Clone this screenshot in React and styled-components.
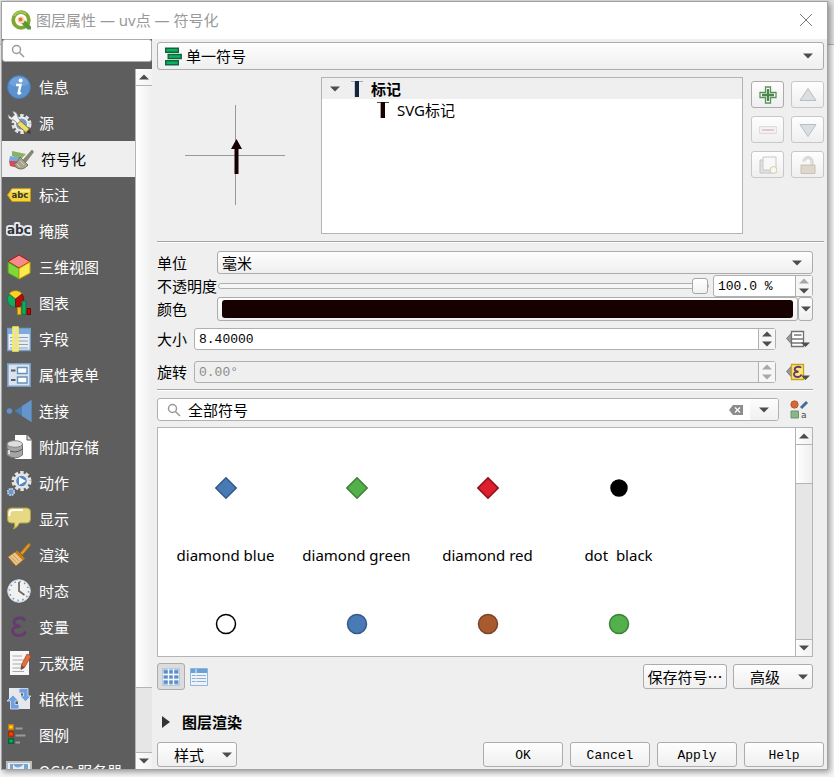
import React from 'react';
import styled, { createGlobalStyle, css } from 'styled-components';

const sans = '"Noto Sans", "Noto Sans CJK SC", sans-serif';
const mono = '"Liberation Mono", "Noto Sans CJK SC", monospace';
const cjk = '"Noto Sans CJK SC", sans-serif';

const GlobalStyle = createGlobalStyle`
  *, *::before, *::after { box-sizing: border-box; }
  body { margin: 0; background: #e4e4e4; }
  button, input, select { font: inherit; color: inherit; margin: 0; }
`;

const raised = css`
  border: 1px solid #acacac;
  border-radius: 3px;
  background: linear-gradient(#fefefe, #efefef);
`;

const Desktop = styled.div`
  height: 100vh;
  min-height: 560px;
  padding: 1px 6px 7px 1px;
  display: flex;
  background: linear-gradient(#e2e2e2 44px, #b4b4b4 44px, #b4b4b4 45px, #f6f6f6 45px);
  overflow: hidden;
`;

const Window = styled.div`
  flex: 1;
  min-width: 0;
  display: flex;
  flex-direction: column;
  border: 1px solid #a2a2a2;
  background: #efefef;
  box-shadow: 2px 2px 6px rgba(0, 0, 0, 0.4);
  font: 15px/20px ${sans};
  color: #000;
`;

const TitleBar = styled.header`
  height: 37px;
  flex: none;
  display: flex;
  align-items: center;
  gap: 4px;
  padding: 0 14px 2px 8px;
  background: #fff;
`;

const Title = styled.h1`
  flex: 1;
  margin: 0;
  font: 15px/20px ${sans};
  color: #999;
`;

const CloseButton = styled.button`
  display: flex;
  padding: 0;
  border: 0;
  background: none;
`;

const Body = styled.div`
  flex: 1;
  min-height: 0;
  display: flex;
`;

const Sidebar = styled.aside`
  width: 150px;
  flex: none;
  display: flex;
  flex-direction: column;
  gap: 7px;
  background: #5e5e5e;
`;

const SidebarSearch = styled.label`
  height: 23px;
  flex: none;
  display: flex;
  align-items: center;
  gap: 4px;
  padding: 0 8px;
  border: 1px solid #acacac;
  border-radius: 3px;
  background: #fff;
`;

const PlainInput = styled.input`
  flex: 1;
  min-width: 0;
  width: 100%;
  height: 20px;
  padding: 0;
  border: 0;
  outline: 0;
  background: transparent;
`;

const NavArea = styled.div`
  flex: 1;
  min-height: 0;
  display: flex;
`;

const NavList = styled.nav`
  flex: 1;
  overflow: hidden;
`;

const NavItem = styled.a`
  height: 36px;
  display: flex;
  align-items: center;
  gap: 7px;
  padding-left: ${(p) => (p.$active ? 6 : 4)}px;
  color: ${(p) => (p.$active ? '#000' : '#fff')};
  background: ${(p) => (p.$active ? '#efefef' : 'transparent')};
  font-family: ${cjk};
  text-decoration: none;
  white-space: nowrap;
`;

const Scroll = styled.div`
  width: 17px;
  flex: none;
  display: flex;
  flex-direction: column;
  border-left: 1px solid #b4b4b4;
  background: #e6e6e6;
`;

const ScrollButton = styled.button`
  height: 17px;
  flex: none;
  display: grid;
  place-items: center;
  padding: 0;
  border: 0 solid #b4b4b4;
  border-width: ${(p) => (p.$end ? '1px 0 0' : '0 0 1px')};
  background: linear-gradient(90deg, #fdfdfd, #f2f2f2);
`;

const Thumb = styled.div`
  flex: ${(p) => p.$size} 0 0;
  border-bottom: 1px solid #b4b4b4;
  background: linear-gradient(90deg, #fff, #efefef);
`;

const Trough = styled.div`
  flex: ${(p) => p.$size} 0 0;
`;

const Main = styled.main`
  flex: 1;
  min-width: 0;
  display: flex;
  flex-direction: column;
  padding: 3px 3px 2px 5px;
  font-family: ${mono};
`;

const SelectFrame = styled.div`
  ${raised}
  flex: ${(p) => (p.$grow ? 1 : 'none')};
  height: ${(p) => p.$height}px;
  display: grid;
  grid-template-columns: ${(p) => (p.$icon ? '29px' : '4px')} 1fr 30px;
  align-items: center;
  justify-items: center;

  select {
    grid-area: 1 / 1 / 2 / 4;
    width: 100%;
    height: 100%;
    padding: 0 0 0 ${(p) => (p.$icon ? 28 : 4)}px;
    border: 0;
    background: none;
    appearance: none;
    font: 15px/20px ${cjk};
  }
  svg {
    pointer-events: none;
    grid-row: 1;
  }
  svg:first-of-type:not(:last-of-type) {
    grid-column: 1;
  }
  svg:last-of-type {
    grid-column: 3;
  }
`;

const SymbolTop = styled.section`
  flex: none;
  display: flex;
  gap: 8px;
  margin: 7px 0;
`;

const Preview = styled.div`
  width: 156px;
  height: 156px;
  display: grid;
  place-items: center;
`;

const Tree = styled.ul`
  flex: 1;
  height: 157px;
  margin: 0;
  padding: 0;
  list-style: none;
  border: 1px solid #b4b4b4;
  background: #fff;
  font-family: ${sans};
`;

const TreeRow = styled.li`
  height: ${(p) => (p.$root ? 21 : 22)}px;
  display: flex;
  align-items: center;
  gap: 8px;
  padding-left: ${(p) => (p.$root ? 5 : 55)}px;
  background: ${(p) => (p.$root ? '#efefef' : 'transparent')};
  font-weight: ${(p) => (p.$root ? 700 : 400)};
`;

const TreeToggle = styled.button`
  width: 16px;
  height: 16px;
  display: grid;
  place-items: center;
  padding: 0;
  border: 0;
  background: none;
`;

const LayerButtons = styled.div`
  display: grid;
  grid-template-columns: 33px 33px;
  grid-auto-rows: 27px;
  gap: 8px 7px;
  padding-top: 4px;
`;

const ToolButton = styled.button`
  ${raised}
  display: grid;
  place-items: center;
  padding: 0;
  &:disabled {
    border-color: #c8c8c8;
  }
`;

const Rule = styled.hr`
  flex: none;
  height: 2px;
  margin: 0 ${(p) => (p.$inset ? 11 : 0)}px 0 0;
  border: 0;
  border-top: 1px solid #a6a6a6;
  background: #fff;
`;

const Form = styled.section`
  flex: none;
  display: flex;
  flex-direction: column;
  padding: 8px 11px 6px 0;
`;

const FormRow = styled.div`
  display: flex;
  align-items: center;
  height: ${(p) => p.$height}px;
  margin-bottom: ${(p) => p.$after || 0}px;
`;

const FieldLabel = styled.label`
  width: ${(p) => (p.$narrow ? 37 : 60)}px;
  flex: none;
  font: 15px/20px ${cjk};
  white-space: nowrap;
`;

const Slider = styled.input`
  flex: 1;
  min-width: 0;
  height: 18px;
  margin: 0 4px 0 1px;
  appearance: none;
  background: transparent;

  &::-webkit-slider-runnable-track {
    height: 6px;
    border: 1px solid #b0b0b0;
    border-radius: 3px;
    background: #f6f6f6;
  }
  &::-webkit-slider-thumb {
    appearance: none;
    width: 16px;
    height: 16px;
    margin-top: -6px;
    border: 1px solid #a6a6a6;
    border-radius: 3px;
    background: linear-gradient(#fff, #f2f2f2);
  }
`;

const SpinFrame = styled.div`
  flex: ${(p) => (p.$fixed ? 'none' : 1)};
  width: ${(p) => (p.$fixed ? '100px' : 'auto')};
  height: 22px;
  display: flex;
  border: 1px solid #b0b0b0;
  border-radius: 3px;
  background: ${(p) => (p.$disabled ? '#efefef' : '#fff')};
  color: ${(p) => (p.$disabled ? '#8a8a8a' : '#000')};
  font: 13px/20px ${mono};

  input {
    padding: 2px 0 0 4px;
  }
`;

const SpinButtons = styled.div`
  width: 17px;
  flex: none;
  display: grid;
  grid-template-rows: 1fr 1fr;
  border-left: 1px solid #b0b0b0;
  background: #f6f6f6;
`;

const SpinButton = styled.button`
  display: grid;
  place-items: center;
  padding: 0;
  border: 0;
  background: none;
`;

const ColorButton = styled.button`
  ${raised}
  flex: 1;
  height: 24px;
  display: flex;
  padding: 2px 4px;
`;

const Swatch = styled.span`
  flex: 1;
  height: 18px;
  border-radius: 3px;
  background: #170000;
`;

const ColorMenuButton = styled.button`
  ${raised}
  width: 15px;
  height: 24px;
  display: grid;
  place-items: center;
  padding: 0;
`;

const FlatButton = styled.button`
  width: ${(p) => (p.$compact ? 24 : 27)}px;
  flex: none;
  display: flex;
  justify-content: center;
  margin-left: 10px;
  padding: 0 ${(p) => (p.$compact ? 4 : 2)}px 0 0;
  border: 0;
  background: none;
`;

const FilterRow = styled.div`
  flex: none;
  display: flex;
  align-items: center;
  padding-right: 11px;
  margin: 7px 0 6px;
`;

const FilterBox = styled.div`
  flex: 1;
  height: 23px;
  display: flex;
  align-items: center;
  gap: 7px;
  padding-left: 9px;
  border: 1px solid #b0b0b0;
  border-radius: 3px;
  background: #fff;
  font: 15px/20px ${cjk};
`;

const InlineButton = styled.button`
  display: grid;
  place-items: center;
  width: ${(p) => (p.$wide ? 28 : 14)}px;
  height: 21px;
  padding: 0;
  border: 0;
  border-radius: 2px;
  background: ${(p) => (p.$wide ? 'linear-gradient(#fdfdfd, #f0f0f0)' : 'none')};
`;

const SymbolPane = styled.section`
  flex: 1;
  min-height: 0;
  display: flex;
  margin-right: 11px;
  border: 1px solid #b4b4b4;
  background: #fff;
`;

const SymbolGrid = styled.ul`
  flex: 1;
  margin: 0;
  padding: 0 0 0 2px;
  list-style: none;
  display: grid;
  grid-template-columns: repeat(4, 131px);
  grid-auto-rows: 136px;
  align-content: start;
  overflow: hidden;
  font: 15px/18px ${sans};
`;

const SymbolCell = styled.li`
  display: flex;
  flex-direction: column;
  align-items: center;
  padding-top: 2px;
  white-space: pre;
`;

const SymbolArt = styled.span`
  height: 116px;
  display: grid;
  place-items: center;
`;

const Toolbar = styled.div`
  flex: none;
  display: flex;
  align-items: center;
  padding-right: 11px;
  margin-top: 6px;
`;

const ViewButton = styled.button`
  width: 28px;
  height: 27px;
  display: grid;
  place-items: center;
  padding: 0;
  border: 1px solid ${(p) => (p.$on ? '#acacac' : 'transparent')};
  border-radius: 3px;
  background: ${(p) => (p.$on ? '#dcdcdc' : 'none')};
`;

const Spacer = styled.span`
  flex: 1;
`;

const PushButton = styled.button`
  ${raised}
  width: ${(p) => (p.$wide ? 84 : 80)}px;
  height: 25px;
  display: flex;
  align-items: center;
  justify-content: ${(p) => (p.$menu ? 'space-between' : 'center')};
  padding: ${(p) => (p.$menu ? '0 4px 0 16px' : p.$cjk ? '0' : '2px 0 0')};
  font: ${(p) => (p.$cjk ? `15px/20px ${cjk}` : `13px/20px ${mono}`)};
  white-space: nowrap;
`;

const GroupHeader = styled.button`
  flex: none;
  align-self: flex-start;
  display: flex;
  align-items: center;
  gap: 12px;
  height: 20px;
  margin: 22px 0 10px;
  padding: 0 0 0 5px;
  border: 0;
  background: none;
  font: 700 15px/20px ${cjk};
`;

const Footer = styled.footer`
  flex: none;
  display: flex;
  gap: 7px;
`;

const ButtonPair = styled.div`
  display: flex;
  gap: 6px;
`;

/* ---------- small glyphs ---------- */

const Arrow = ({ up, dim }) => (
  <svg width="10" height="6" viewBox="0 0 10 6" aria-hidden="true">
    <path d={up ? 'M0 5.5L5 .5L10 5.5Z' : 'M0 .5H10L5 5.5Z'} fill={dim ? '#a8a8a8' : '#4d4d4d'} />
  </svg>
);

const SearchIcon = () => (
  <svg width="14" height="14" viewBox="0 0 14 14" fill="none" stroke="#999" strokeWidth="1.5" aria-hidden="true">
    <circle cx="5.5" cy="5.5" r="4" />
    <path d="M8.5 8.5L13 13" />
  </svg>
);

const Logo = () => (
  <svg width="22" height="22" viewBox="0 0 22 22" aria-hidden="true">
    <circle cx="11" cy="11" r="7.800" fill="none" stroke="#7da834" strokeWidth="3.800" />
    <path d="M4 7a8 8 0 0 1 12-2" fill="none" stroke="#a5c95a" strokeWidth="1.800" />
    <path d="M11.500 11.500H15L21 17.500V20.500H17.500L11.500 14.500Z" fill="#5d9537" />
    <circle cx="11" cy="11" r="3.600" fill="#fbdcb4" />
    <circle cx="10.500" cy="10.500" r="2" fill="#e9702a" />
  </svg>
);

const Bars = () => (
  <svg width="18" height="19" viewBox="0 0 18 19" fill="#08b35c" stroke="#13643e" strokeWidth="1.4" aria-hidden="true">
    <path d="M1.7 1.2H14.3V5.2H1.7ZM4.2 7.5H17.2V11.5H4.2ZM1.7 13.8H14.3V17.8H1.7Z" />
  </svg>
);

const PreviewDrawing = () => (
  <svg width="100" height="100" viewBox="0 0 100 100" role="img" aria-label="symbol preview">
    <path d="M0 50.5H100M50.5 0V100" stroke="#999" />
    <path d="M51.500 34L57 44H53.500V69H49.500V44H46Z" fill="#170000" />
  </svg>
);

const Marker = ({ color, cap }) => (
  <svg width="12" height="16" viewBox="0 0 12 16" aria-hidden="true">
    <path d="M0 .5H12" stroke={cap} />
    <path d="M4 0H8V16H4Z" fill={color} />
    <path d="M3.500 1V16" stroke={cap} opacity=".5" />
  </svg>
);

const tools = {
  add: (
    <>
      <path d="M6.500 1H11.500V6.500H17V11.500H11.500V17H6.500V11.500H1V6.500H6.500Z" fill="#fff" stroke="#5b9158" strokeWidth="1.300" />
      <path d="M9 3V15M3 9H15" stroke="#4c854a" strokeWidth="2.400" />
    </>
  ),
  remove: (
    <>
      <path d="M.7 5.700H17.300V12.300H.7Z" fill="#f8f3f3" stroke="#dfd2d2" />
      <path d="M3 9H15" stroke="#dccccc" strokeWidth="2" />
    </>
  ),
  up: <path d="M9 2.500L17 14.500H1Z" fill="#dcdfe2" stroke="#b9bdc0" />,
  down: <path d="M9 15.500L17 3.500H1Z" fill="#dcdfe2" stroke="#b9bdc0" />,
  copy: (
    <>
      <path d="M1 4H13V17H1Z" fill="#e1e1e1" stroke="#c4c4c4" />
      <path d="M4 1H17V14H4Z" fill="#f8f8f8" stroke="#c8c8c8" />
      <circle cx="14.500" cy="14" r="3.500" fill="#f6f4e2" stroke="#d2cdb4" />
      <path d="M12.500 14H16.500M14.500 12V16" stroke="#fff" />
    </>
  ),
  lock: (
    <>
      <path d="M5 5.500a4 4 0 0 1 8 0V9" fill="none" stroke="#c9c9c9" strokeWidth="2.800" />
      <path d="M5 5.500a4 4 0 0 1 8 0V9" fill="none" stroke="#f0f0f0" />
      <path d="M2 9H16V17.500H2Z" fill="#dcd7c9" stroke="#c8c2b0" />
    </>
  ),
};

const ToolIcon = ({ name }) => (
  <svg width="18" height="18" viewBox="0 0 18 18" aria-hidden="true">{tools[name]}</svg>
);

/* ---------- sidebar drawings ---------- */

const gearTeeth = { fill: 'none', stroke: '#e4e4e4', strokeWidth: 3, strokeDasharray: '3.4 2.1' };

const art = {
  info: (
    <>
      <circle cx="12" cy="12" r="11.500" fill="#5b92cf" stroke="#467bb6" />
      <path d="M2 9a10.500 10.500 0 0 1 20 0Q12 14 2 9Z" fill="#80addd" opacity=".6" />
      <circle cx="13.600" cy="5.600" r="2" fill="#fff" />
      <path d="M9 10H13.500L11.500 18.200Q12 19 14 17.600" fill="none" stroke="#fff" strokeWidth="2.400" />
    </>
  ),
  source: (
    <>
      <circle cx="14.500" cy="13" r="8.500" {...gearTeeth} />
      <circle cx="14.500" cy="13" r="6.500" fill="#7198c4" stroke="#ececec" strokeWidth="2" />
      <path d="M1 3.500L4.500 6.500L7.500 4L5.500 .5Q10.500 .5 10.500 5.500L14 11L11.500 13.500L7 9Q1 9.500 1 3.500Z" fill="#f1f1f1" stroke="#777" strokeWidth=".7" />
      <path d="M10 13.500L13.500 10L22.500 18L19 21.500Z" fill="#eedc6d" stroke="#907b22" />
      <path d="M19 21.500L22.500 18L24 23Z" fill="#3f3f3f" />
    </>
  ),
  style: (
    <>
      <path d="M3 4L17 7L12 12L3 9Z" fill="#89b266" />
      <path d="M1 9L12 11L11 16L0 14Z" fill="#79a8df" />
      <path d="M0 14L12 14L13 22L1 19Z" fill="#d44b5e" />
      <path d="M11 10L19 18Q14 24 8 21L5 17Q9 16 11 10Z" fill="#aaa48c" stroke="#777362" />
      <path d="M14.500 12.500L23 3L24.500 5L17 15Z" fill="#8c8871" stroke="#6b6858" strokeWidth=".6" />
      <path d="M8 17L11 20M11 14L15 18" stroke="#d4d0bd" />
    </>
  ),
  label: (
    <>
      <path d="M.5 12L5 5.500H23.500V18.500H5Z" fill="#f3d43a" stroke="#c49a12" />
      <path d="M5 6.500H23V9H4Z" fill="#fbe982" />
      <text x="4.500" y="15" fontFamily="DejaVu Sans" fontSize="8.500" fontWeight="700" fill="#333">abc</text>
    </>
  ),
  mask: (
    <text x="0" y="15" fontFamily="DejaVu Sans" fontSize="12" fontWeight="700" fill="#333" stroke="#e3e8f4" strokeWidth="4" strokeLinejoin="round" paintOrder="stroke">abc</text>
  ),
  cube: (
    <>
      <path d="M12 0L23 6.500L12 13L1 6.500Z" fill="#f58c8c" stroke="#b80f0f" />
      <path d="M1 7V18L12 24V13.500Z" fill="#82d63d" stroke="#4f9a14" />
      <path d="M23 7V18L12 24V13.500Z" fill="#fce94f" stroke="#c9a500" />
    </>
  ),
  chart: (
    <>
      <path d="M8.500 8L2 3A8 8 0 0 1 15 3Z" fill="#fdd21e" stroke="#b88b00" strokeWidth=".7" />
      <path d="M8.500 8L2 3A8 8 0 0 0 8.500 16Z" fill="#0bae60" stroke="#0b7241" strokeWidth=".7" />
      <path d="M8.500 8L15 3A8 8 0 0 1 8.500 16Z" fill="#b90909" stroke="#750000" strokeWidth=".7" />
      <path d="M10.500 16.500H14V23.500H10.500Z" fill="#fdc01e" stroke="#b88b00" />
      <path d="M15 10H19V23.500H15Z" fill="#0bae60" stroke="#0b7241" />
      <path d="M20 17.500H23.500V23.500H20Z" fill="#b90909" stroke="#750000" />
    </>
  ),
  fields: (
    <>
      <path d="M.7 1.500H23.300V23.500H.7Z" fill="#e9edf2" stroke="#6f9dcc" strokeWidth="1.400" />
      <path d="M1 2H23V7H1Z" fill="#7eabdc" />
      <path d="M3 10.500H21M3 14H21M3 17.500H21M3 21H21" stroke="#8ca2ba" strokeWidth="1.200" />
      <path d="M6 0H11V24H6Z" fill="#eadfae" stroke="#fbee4c" strokeWidth="1.600" />
    </>
  ),
  form: (
    <>
      <path d="M.8 .8H23.200V23.200H.8Z" fill="#dbe3ed" stroke="#749dc8" strokeWidth="1.600" />
      <path d="M10.500 4.500H20V10.500H10.500ZM10.500 14H20V20H10.500Z" fill="#fff" stroke="#6591bf" strokeWidth="1.400" />
      <path d="M4 7.500H8.500M4 17H8.500" stroke="#555f6d" strokeWidth="2" />
    </>
  ),
  join: (
    <>
      <circle cx="2.500" cy="12" r="2.800" fill="#5f93cc" />
      <path d="M7.500 12L24.500 1V23Z" fill="#4b7fb8" />
      <path d="M15 7L24.500 1V23L15 17Z" fill="#6695cb" />
    </>
  ),
  storage: (
    <>
      <path d="M8 0H20L24.500 5V24H8Z" fill="#fff" />
      <path d="M20 0V5H24.500" fill="#d6d6d6" stroke="#555" />
      <path d="M0 9V20Q8 26 15.500 20V9Z" fill="#a6a6a6" stroke="#777" />
      <ellipse cx="7.800" cy="9" rx="7.700" ry="3.300" fill="#dedede" stroke="#888" />
      <path d="M0 14Q8 20 15.500 14" fill="none" stroke="#555" />
      <path d="M2 15V19" stroke="#ddd" strokeWidth="2" />
    </>
  ),
  action: (
    <>
      <circle cx="14.500" cy="10" r="8.500" {...gearTeeth} />
      <circle cx="14.500" cy="10" r="6.500" fill="#5588c5" stroke="#e6e6e6" strokeWidth="2.400" />
      <path d="M12 6L19 10L12 14Z" fill="#fff" />
      <circle cx="4" cy="21" r="3.300" fill="#699bd2" stroke="#d5dde6" strokeWidth="1.500" strokeDasharray="1.600 1" />
    </>
  ),
  display: (
    <>
      <path d="M4 1H20Q23.500 1 23.500 5V12Q23.500 16 20 16H12.500Q11 20 6.500 22Q8.500 19 7.500 16H4Q.5 16 .5 12V5Q.5 1 4 1Z" fill="#e5d985" stroke="#b5a13a" />
      <path d="M2.500 9V6Q3 3 7 3H16" fill="none" stroke="#fff" strokeWidth="1.800" />
    </>
  ),
  render: (
    <>
      <path d="M13 10L21 1Q24 -1 23 3L15.500 12Z" fill="#e19a2d" stroke="#a56612" />
      <path d="M8 9L16 17L9 23L1 14Z" fill="#e9c58c" stroke="#b17320" />
      <path d="M9 8.500L17 16.500" stroke="#c47f1b" strokeWidth="3" />
      <path d="M4 14L10 20M6 12L12 18" stroke="#c69247" strokeWidth=".8" />
    </>
  ),
  clock: (
    <>
      <circle cx="12" cy="12" r="11.300" fill="#f1f2f0" stroke="#d7d7d7" />
      <circle cx="12" cy="12" r="9.500" fill="none" stroke="#6da0d8" strokeWidth="1.600" strokeDasharray="1.600 3.374" />
      <path d="M12 3V12L17.500 16" fill="none" stroke="#666" strokeWidth="1.700" />
    </>
  ),
  variable: (
    <path d="M17.500 6Q17 2.500 12.500 3Q7 3.500 7 7.300Q7.500 11 13.500 11.300Q5.500 11.300 5.500 16Q6 20.500 12 20.500Q17 20.500 18.500 16.500" fill="none" stroke="#663b70" strokeWidth="2.800" />
  ),
  metadata: (
    <>
      <path d="M3 0H22V24H3Z" fill="#f7f7f7" />
      <path d="M5.500 5H15M5.500 9H17M5.500 13H16M5.500 17H15M5.500 20.500H17" stroke="#aaa" />
      <path d="M20 3L24 5L17.500 16.500L14 18.500L14.500 14Z" fill="#e4703d" stroke="#a84b21" strokeWidth=".8" />
      <path d="M14.500 14L17.500 16.500L14 18.500Z" fill="#555" />
    </>
  ),
  dependency: (
    <>
      <path d="M2 1H14V13H2ZM11 9H23V22H11Z" fill="#e6e8eb" />
      <path d="M12 1.500H21V9H24L18.500 14.500L13 9H16.500V6H12Z" fill="#6fa0e2" stroke="#dce9fa" strokeWidth=".8" />
      <path d="M12 22H3.500V14H0L6 8L11.500 14H8V17.500H12Z" fill="#6fa0e2" stroke="#dce9fa" strokeWidth=".8" />
    </>
  ),
  legend: (
    <>
      <path d="M1.700 1.700H6.300V6.300H1.700Z" fill="#fddc12" stroke="#c77c12" strokeWidth="1.400" />
      <path d="M1.700 8.700H6.300V13.300H1.700Z" fill="#f64c0b" stroke="#aa2d00" strokeWidth="1.400" />
      <path d="M1.700 15.700H6.300V20.300H1.700Z" fill="#08b35c" stroke="#08623a" strokeWidth="1.400" />
      <path d="M8.500 5.500H15.500M8.500 12.500H18.500M8.500 19.500H13" stroke="#9a9a9a" strokeWidth="1.800" />
    </>
  ),
  server: (
    <>
      <path d="M0 3H24V22H0Z" fill="#e9eef4" stroke="#bdbdbd" strokeWidth="2" />
      <path d="M3 5H21V18H3Z" fill="#78a5d2" />
      <path d="M6 5Q10 12 17 5V12H6Z" fill="#e9eef4" />
    </>
  ),
};

const NavIcon = ({ name }) => (
  <svg width="26" height="26" viewBox="-1 -1 26 26" aria-hidden="true">{art[name]}</svg>
);

const navItems = [
  ['info', '信息'], ['source', '源'], ['style', '符号化'], ['label', '标注'], ['mask', '掩膜'],
  ['cube', '三维视图'], ['chart', '图表'], ['fields', '字段'], ['form', '属性表单'], ['join', '连接'],
  ['storage', '附加存储'], ['action', '动作'], ['display', '显示'], ['render', '渲染'], ['clock', '时态'],
  ['variable', '变量'], ['metadata', '元数据'], ['dependency', '相依性'], ['legend', '图例'], ['server', 'QGIS 服务器'],
];

const symbols = [
  { shape: 'diamond', fill: '#487bb6', edge: '#34598a', name: 'diamond blue' },
  { shape: 'diamond', fill: '#54b04a', edge: '#3c8035', name: 'diamond green' },
  { shape: 'diamond', fill: '#dd1f2c', edge: '#8a101a', name: 'diamond red' },
  { shape: 'dot', fill: '#000', edge: '#000', name: 'dot  black', r: 8 },
  { shape: 'dot', fill: '#fff', edge: '#000' },
  { shape: 'dot', fill: '#487bb6', edge: '#34598a' },
  { shape: 'dot', fill: '#aa5a2f', edge: '#7b4427' },
  { shape: 'dot', fill: '#54b04a', edge: '#3c8035' },
];

const SymbolShape = ({ shape, fill, edge, r = 9.5 }) => (
  <svg width="24" height="24" viewBox="0 0 24 24" fill={fill} stroke={edge} strokeWidth="1.500" aria-hidden="true">
    {shape === 'diamond' ? <path d="M12 1.800L22.200 12L12 22.200L1.800 12Z" /> : <circle cx="12" cy="12" r={r} />}
  </svg>
);

const OverrideIcon = ({ active }) => (
  <svg width="25" height="18" viewBox="0 0 25 18" aria-hidden="true">
    <path d="M6 2.500V14.500L.5 8.500Z" fill="#999" stroke="#777" />
    <path d="M5.500 1.500H17.500V16.500H5.500Z" fill={active ? '#fbe77c' : '#fff'} stroke={active ? '#c9a312' : '#707070'} strokeWidth="1.300" />
    {active ? (
      <path d="M15 5Q14.500 3.500 12 3.700Q8.500 4 8.700 6.500Q9 8.500 12.500 8.700Q7.700 8.800 8 11.500Q8.300 14 11.500 14Q14.500 14 15.500 11.500" fill="none" stroke="#663b70" strokeWidth="1.900" />
    ) : (
      <path d="M8 5H15.500M6 9H17M6 13H17" stroke="#777" strokeWidth="1.500" />
    )}
    <path d="M15 12.500H24L19.500 17Z" fill="#4d4d4d" />
  </svg>
);

const StyleManagerIcon = () => (
  <svg width="19" height="19" viewBox="0 0 19 19" aria-hidden="true">
    <circle cx="4.500" cy="4.500" r="3.700" fill="#d46a36" stroke="#ac4a1c" strokeWidth=".7" />
    <path d="M11 8L17 2" stroke="#426c99" strokeWidth="3" />
    <path d="M1 11H8.500V18H1Z" fill="#8bb48b" stroke="#6a946b" />
    <text x="11" y="18" fontFamily="DejaVu Sans" fontSize="9" fill="#444">a</text>
  </svg>
);

const ClearIcon = () => (
  <svg width="14" height="10" viewBox="0 0 14 10" aria-hidden="true">
    <path d="M4 0H14V10H4L0 5Z" fill="#8c8c8c" />
    <path d="M6 2.500L11 7.500M11 2.500L6 7.500" stroke="#fff" strokeWidth="1.200" />
  </svg>
);

const GridIcon = () => (
  <svg width="18" height="18" viewBox="0 0 18 18" aria-hidden="true">
    <path d="M0 0H18V18H0Z" fill="#b4cbe3" />
    <path d="M2 4H16M2 9H16M2 14H16" stroke="#5c8fc6" strokeWidth="3.400" strokeDasharray="4 1" />
    <path d="M6.500 1V17M11.500 1V17M1 6.500H17M1 11.500H17" stroke="#f4f8fc" strokeWidth="1.400" />
  </svg>
);

const ListIcon = () => (
  <svg width="18" height="18" viewBox="0 0 18 18" aria-hidden="true">
    <path d="M.5 .5H17.500V17.500H.5Z" fill="#edf3f9" stroke="#8fb6dc" />
    <path d="M1 1H17V5H1Z" fill="#6c9fd2" />
    <path d="M2 7.500H16M2 10.500H16M2 13.500H16" stroke="#8dafd2" strokeWidth="1.200" />
    <path d="M6 1V17" stroke="#e5eef8" />
  </svg>
);

const ScrollBar = ({ thumb, rest }) => (
  <Scroll>
    <ScrollButton aria-label="scroll up"><Arrow up /></ScrollButton>
    <Thumb $size={thumb} />
    <Trough $size={rest} />
    <ScrollButton $end aria-label="scroll down"><Arrow /></ScrollButton>
  </Scroll>
);

const SpinBox = ({ id, value, fixed, disabled, atMax, label }) => (
  <SpinFrame $fixed={fixed} $disabled={disabled}>
    <PlainInput id={id} defaultValue={value} disabled={disabled} aria-label={label} />
    <SpinButtons>
      <SpinButton disabled={disabled || atMax} aria-label="increase"><Arrow up dim={disabled || atMax} /></SpinButton>
      <SpinButton disabled={disabled} aria-label="decrease"><Arrow dim={disabled} /></SpinButton>
    </SpinButtons>
  </SpinFrame>
);

export default function App() {
  return (
    <Desktop>
      <GlobalStyle />
      <Window>
        <TitleBar>
          <Logo />
          <Title>图层属性 — uv点 — 符号化</Title>
          <CloseButton aria-label="close">
            <svg width="14" height="14" viewBox="0 0 14 14" stroke="#777"><path d="M1 1L13 13M13 1L1 13" /></svg>
          </CloseButton>
        </TitleBar>
        <Body>
          <Sidebar>
            <SidebarSearch>
              <SearchIcon />
              <PlainInput aria-label="search" />
            </SidebarSearch>
            <NavArea>
              <NavList>
                {navItems.map(([icon, text]) => (
                  <NavItem key={icon} href={`#${icon}`} $active={icon === 'style'}>
                    <NavIcon name={icon} />
                    {text}
                  </NavItem>
                ))}
              </NavList>
              <ScrollBar thumb={602} rest={64} />
            </NavArea>
          </Sidebar>
          <Main>
            <SelectFrame $height={28} $icon>
              <select aria-label="renderer"><option>单一符号</option></select>
              <Bars />
              <Arrow />
            </SelectFrame>
            <SymbolTop>
              <Preview><PreviewDrawing /></Preview>
              <Tree>
                <TreeRow $root>
                  <TreeToggle aria-label="collapse"><Arrow /></TreeToggle>
                  <Marker color="#14253f" cap="#a5acb5" />
                  标记
                </TreeRow>
                <TreeRow>
                  <Marker color="#170000" cap="#574848" />
                  SVG标记
                </TreeRow>
              </Tree>
              <LayerButtons>
                <ToolButton aria-label="add layer"><ToolIcon name="add" /></ToolButton>
                <ToolButton disabled aria-label="move up"><ToolIcon name="up" /></ToolButton>
                <ToolButton disabled aria-label="remove layer"><ToolIcon name="remove" /></ToolButton>
                <ToolButton disabled aria-label="move down"><ToolIcon name="down" /></ToolButton>
                <ToolButton disabled aria-label="duplicate layer"><ToolIcon name="copy" /></ToolButton>
                <ToolButton disabled aria-label="lock colour"><ToolIcon name="lock" /></ToolButton>
              </LayerButtons>
            </SymbolTop>
            <Rule />
            <Form>
              <FormRow $height={23} $after={1}>
                <FieldLabel htmlFor="unit">单位</FieldLabel>
                <SelectFrame $height={23} $grow>
                  <select id="unit"><option>毫米</option></select>
                  <Arrow />
                </SelectFrame>
              </FormRow>
              <FormRow $height={22}>
                <FieldLabel htmlFor="opacity">不透明度</FieldLabel>
                <Slider id="opacity" type="range" defaultValue="100" />
                <SpinBox value="100.0 %" fixed atMax label="opacity value" />
              </FormRow>
              <FormRow $height={24} $after={7}>
                <FieldLabel htmlFor="color">颜色</FieldLabel>
                <ColorButton id="color"><Swatch /></ColorButton>
                <ColorMenuButton aria-label="colour menu"><Arrow /></ColorMenuButton>
              </FormRow>
              <FormRow $height={22} $after={11}>
                <FieldLabel htmlFor="size" $narrow>大小</FieldLabel>
                <SpinBox id="size" value="8.40000" />
                <FlatButton aria-label="size override"><OverrideIcon /></FlatButton>
              </FormRow>
              <FormRow $height={22}>
                <FieldLabel htmlFor="rotation" $narrow>旋转</FieldLabel>
                <SpinBox id="rotation" value="0.00°" disabled />
                <FlatButton aria-label="rotation override"><OverrideIcon active /></FlatButton>
              </FormRow>
            </Form>
            <Rule $inset />
            <FilterRow>
              <FilterBox>
                <SearchIcon />
                <PlainInput defaultValue="全部符号" aria-label="symbol group" />
                <InlineButton aria-label="clear"><ClearIcon /></InlineButton>
                <InlineButton $wide aria-label="open list"><Arrow /></InlineButton>
              </FilterBox>
              <FlatButton $compact aria-label="style manager"><StyleManagerIcon /></FlatButton>
            </FilterRow>
            <SymbolPane>
              <SymbolGrid>
                {symbols.map((s, i) => (
                  <SymbolCell key={i}>
                    <SymbolArt><SymbolShape {...s} /></SymbolArt>
                    {s.name}
                  </SymbolCell>
                ))}
              </SymbolGrid>
              <ScrollBar thumb={38} rest={156} />
            </SymbolPane>
            <Toolbar>
              <ViewButton $on aria-label="icon view"><GridIcon /></ViewButton>
              <ViewButton aria-label="list view"><ListIcon /></ViewButton>
              <Spacer />
              <ButtonPair>
                <PushButton $cjk $wide>保存符号…</PushButton>
                <PushButton $cjk $menu>高级<Arrow /></PushButton>
              </ButtonPair>
            </Toolbar>
            <GroupHeader>
              <svg width="8" height="12" viewBox="0 0 8 12" aria-hidden="true"><path d="M0 0L8 6L0 12Z" fill="#333" /></svg>
              图层渲染
            </GroupHeader>
            <Footer>
              <PushButton $cjk $menu>样式<Arrow /></PushButton>
              <Spacer />
              <PushButton>OK</PushButton>
              <PushButton>Cancel</PushButton>
              <PushButton>Apply</PushButton>
              <PushButton>Help</PushButton>
            </Footer>
          </Main>
        </Body>
      </Window>
    </Desktop>
  );
}
